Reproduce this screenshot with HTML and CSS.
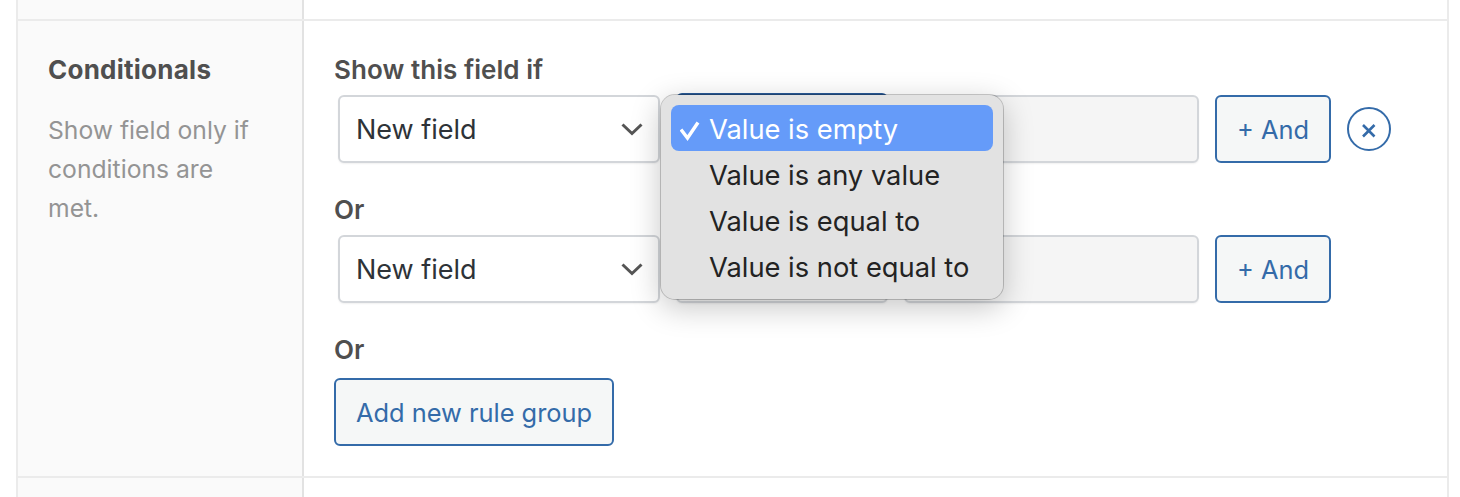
FILE: index.html
```html
<!DOCTYPE html>
<html lang="en">
<head>
<meta charset="utf-8">
<title>Conditionals</title>
<link rel="stylesheet" href="styles.css">
</head>
<body>
<div class="panel">
  <div class="stub"><div class="stub-side"></div><div class="stub-main"></div></div>
  <section class="row">
    <aside class="side">
      <h2 class="side-title">Conditionals</h2>
      <p class="side-text">Show field only if conditions are met.</p>
    </aside>
    <div class="main">
      <div class="group-label first">Show this field if</div>
      <div class="rule">
        <div class="select"><span>New field</span>
          <svg class="chev" viewBox="0 0 22 14"><path d="M1.5 2.5 11 11.5 20.5 2.5"/></svg>
        </div>
        <div class="operator focused"></div>
        <div class="value"></div>
        <button class="btn and">+ And</button>
        <button class="remove" aria-label="Remove">
          <svg viewBox="0 0 44 44"><circle cx="22" cy="22" r="21"/><path d="M16 18 27.5 29.5M27.5 18 16 29.5"/></svg>
        </button>
        <div class="menu">
          <div class="item active"><svg class="check" viewBox="0 0 20 20"><path d="M1 8.5 7.5 17 18 1.5"/></svg>Value is empty</div>
          <div class="item">Value is any value</div>
          <div class="item">Value is equal to</div>
          <div class="item">Value is not equal to</div>
        </div>
      </div>
      <div class="group-label">Or</div>
      <div class="rule">
        <div class="select"><span>New field</span>
          <svg class="chev" viewBox="0 0 22 14"><path d="M1.5 2.5 11 11.5 20.5 2.5"/></svg>
        </div>
        <div class="operator"></div>
        <div class="value"></div>
        <button class="btn and">+ And</button>
      </div>
      <div class="group-label last">Or</div>
      <button class="btn add">Add new rule group</button>
    </div>
  </section>
  <div class="stub"><div class="stub-side"></div><div class="stub-main"></div></div>
</div>
</body>
</html>
```
FILE: styles.css
```css
* { box-sizing: border-box; }
html, body { margin: 0; height: 497px; overflow: hidden; background: #fff; }
body { font-family: Inter, "Liberation Sans", sans-serif; color: #4f4f4f; }
.panel { margin: 0 11px 0 16px; border-left: 2px solid #ebebeb; border-right: 2px solid #ebebeb; }
.stub { display: flex; height: 19px; }
.stub-side { width: 286px; background: #fafafa; border-right: 2px solid #e2e2e2; }
.stub-main { flex: 1; }
.row { display: flex; height: 459px; border-top: 2px solid #ebebeb; border-bottom: 2px solid #ebebeb; }
.side { width: 286px; flex: none; background: #fafafa; border-right: 2px solid #e2e2e2; padding: 32px 45px 0 30px; }
.side-title { margin: 0; font-size: 26px; line-height: 34px; font-weight: 700; letter-spacing: .25px; color: #4f4f4f; }
.side-text { margin: 24px 0 0; font-size: 24.7px; line-height: 39px; color: #949494; }
.main { flex: 1; padding: 32px 0 0 30px; }
.group-label { font-size: 26px; line-height: 34px; font-weight: 600; letter-spacing: .05px; color: #4f4f4f; margin-top: 30px; margin-bottom: 8px; }
.group-label.first { margin-top: 0; }
.group-label.last { margin-bottom: 11px; }
.rule { position: relative; display: flex; align-items: center; height: 68px; padding-left: 4px; }
.select { width: 322px; height: 68px; border: 2px solid #d3d6da; border-radius: 6px; background: #fff; box-shadow: 0 1px 2px rgba(0,0,0,.06); display: flex; align-items: center; justify-content: space-between; padding: 0 15px 0 16px; font-size: 27px; color: #2e3338; }
.chev { width: 22px; height: 14px; fill: none; stroke: #555; stroke-width: 3; }
.operator { width: 212px; height: 68px; margin-left: 16px; border: 2px solid #d3d6da; border-radius: 6px; background: #f5f5f5; box-shadow: 0 1px 2px rgba(0,0,0,.06); }
.operator.focused { border-color: #2a5a96; box-shadow: 0 -2px 0 #2a5a96; }
.value { width: 295px; height: 68px; margin-left: 16px; border: 2px solid #d3d6da; border-radius: 6px; background: #f5f5f5; box-shadow: 0 1px 2px rgba(0,0,0,.06); }
.btn { font-family: inherit; border: 2px solid #346ba9; border-radius: 6px; background: #f5f7f7; color: #346ba9; font-size: 25.4px; height: 68px; padding: 1px 0 0; }
.and { width: 116px; margin-left: 16px; }
.add { width: 280px; margin-left: 0; display: block; }
.remove { width: 44px; height: 44px; margin-left: 16px; padding: 0; border: 0; background: none; }
.remove svg { display: block; width: 44px; height: 44px; fill: none; stroke: #346ba9; }
.remove circle { stroke-width: 2; }
.remove path { stroke-width: 2.6; }
.menu { position: absolute; left: 326px; top: -1px; width: 344px; height: 206px; padding: 10px 10px; background: #e2e2e2; background-clip: padding-box; border: 1px solid rgba(0,0,0,.2); border-radius: 15px; box-shadow: 0 8px 30px rgba(0,0,0,.22); z-index: 2; }
.item { position: relative; height: 46px; line-height: 42px; padding: 4px 0 0 38px; font-size: 27.3px; color: #232323; border-radius: 8px; white-space: nowrap; }
.item.active { background: #659bf9; color: #fff; }
.check { position: absolute; left: 9px; top: 16px; width: 20px; height: 20px; fill: none; stroke: #fff; stroke-width: 3.4; }
```
